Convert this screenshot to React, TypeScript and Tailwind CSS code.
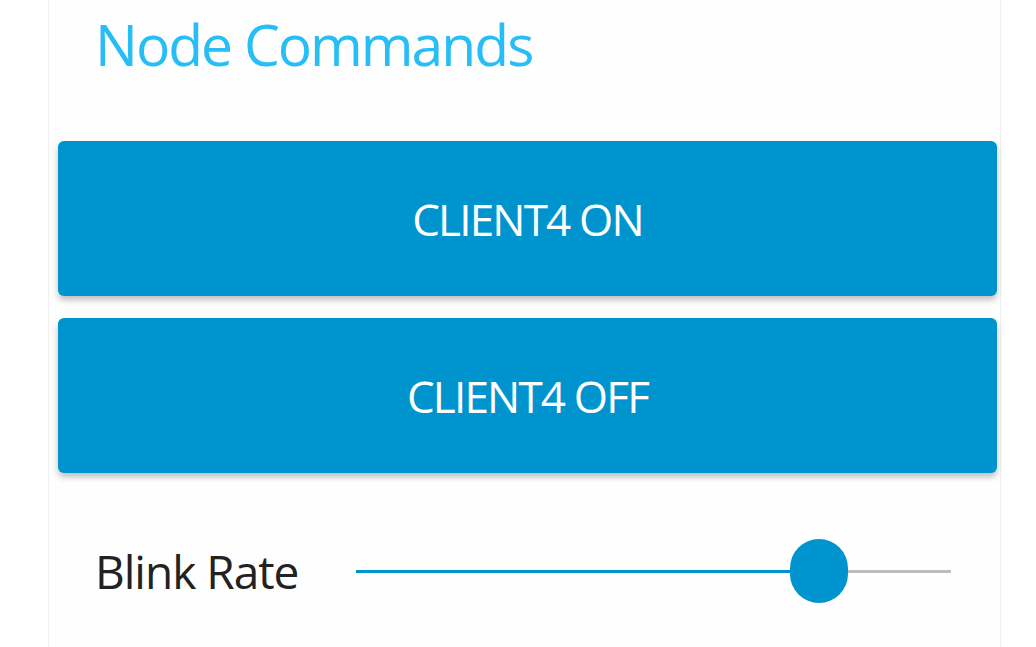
export default function App() {
  const font = { fontFamily: '"Open Sans", "Noto Sans", sans-serif' };
  return (
    <div className="w-[1036px] h-[647px] bg-white overflow-hidden" style={font}>
      <div className="ml-[48px] w-[953px] h-full bg-[#fefefe] border-x border-[#f0f0f0] pl-[9px] pr-[3px]">
        <h1 className="pl-[37px] pt-[4px] h-[141px] text-[57px] leading-[80px] text-[#27bdf7] tracking-[-2px]">
          Node Commands
        </h1>
        <div className="flex flex-col gap-[22px]">
          <button className="h-[155px] w-full rounded-[6px] bg-[#0094cf] text-white text-[44px] tracking-[-1.8px] shadow-[0_4px_6px_rgba(0,0,0,0.25)]">
            CLIENT4 ON
          </button>
          <button className="h-[155px] w-full rounded-[6px] bg-[#0094cf] text-white text-[44px] tracking-[-1.8px] shadow-[0_4px_6px_rgba(0,0,0,0.25)]">
            CLIENT4 OFF
          </button>
        </div>
        <div className="flex items-center mt-[66px] pl-[37px]">
          <span className="w-[261px] text-[46px] leading-[60px] text-[#222] tracking-[-1px]">Blink Rate</span>
          <div className="relative w-[595px] h-[64px] flex items-center">
            <div className="h-[3px] w-[465px] bg-[#0094cf]" />
            <div className="h-[3px] flex-1 bg-[#bdbdbd]" />
            <div className="absolute left-[434px] top-0 w-[58px] h-[64px] rounded-full bg-[#0094cf]" />
          </div>
        </div>
      </div>
    </div>
  );
}
